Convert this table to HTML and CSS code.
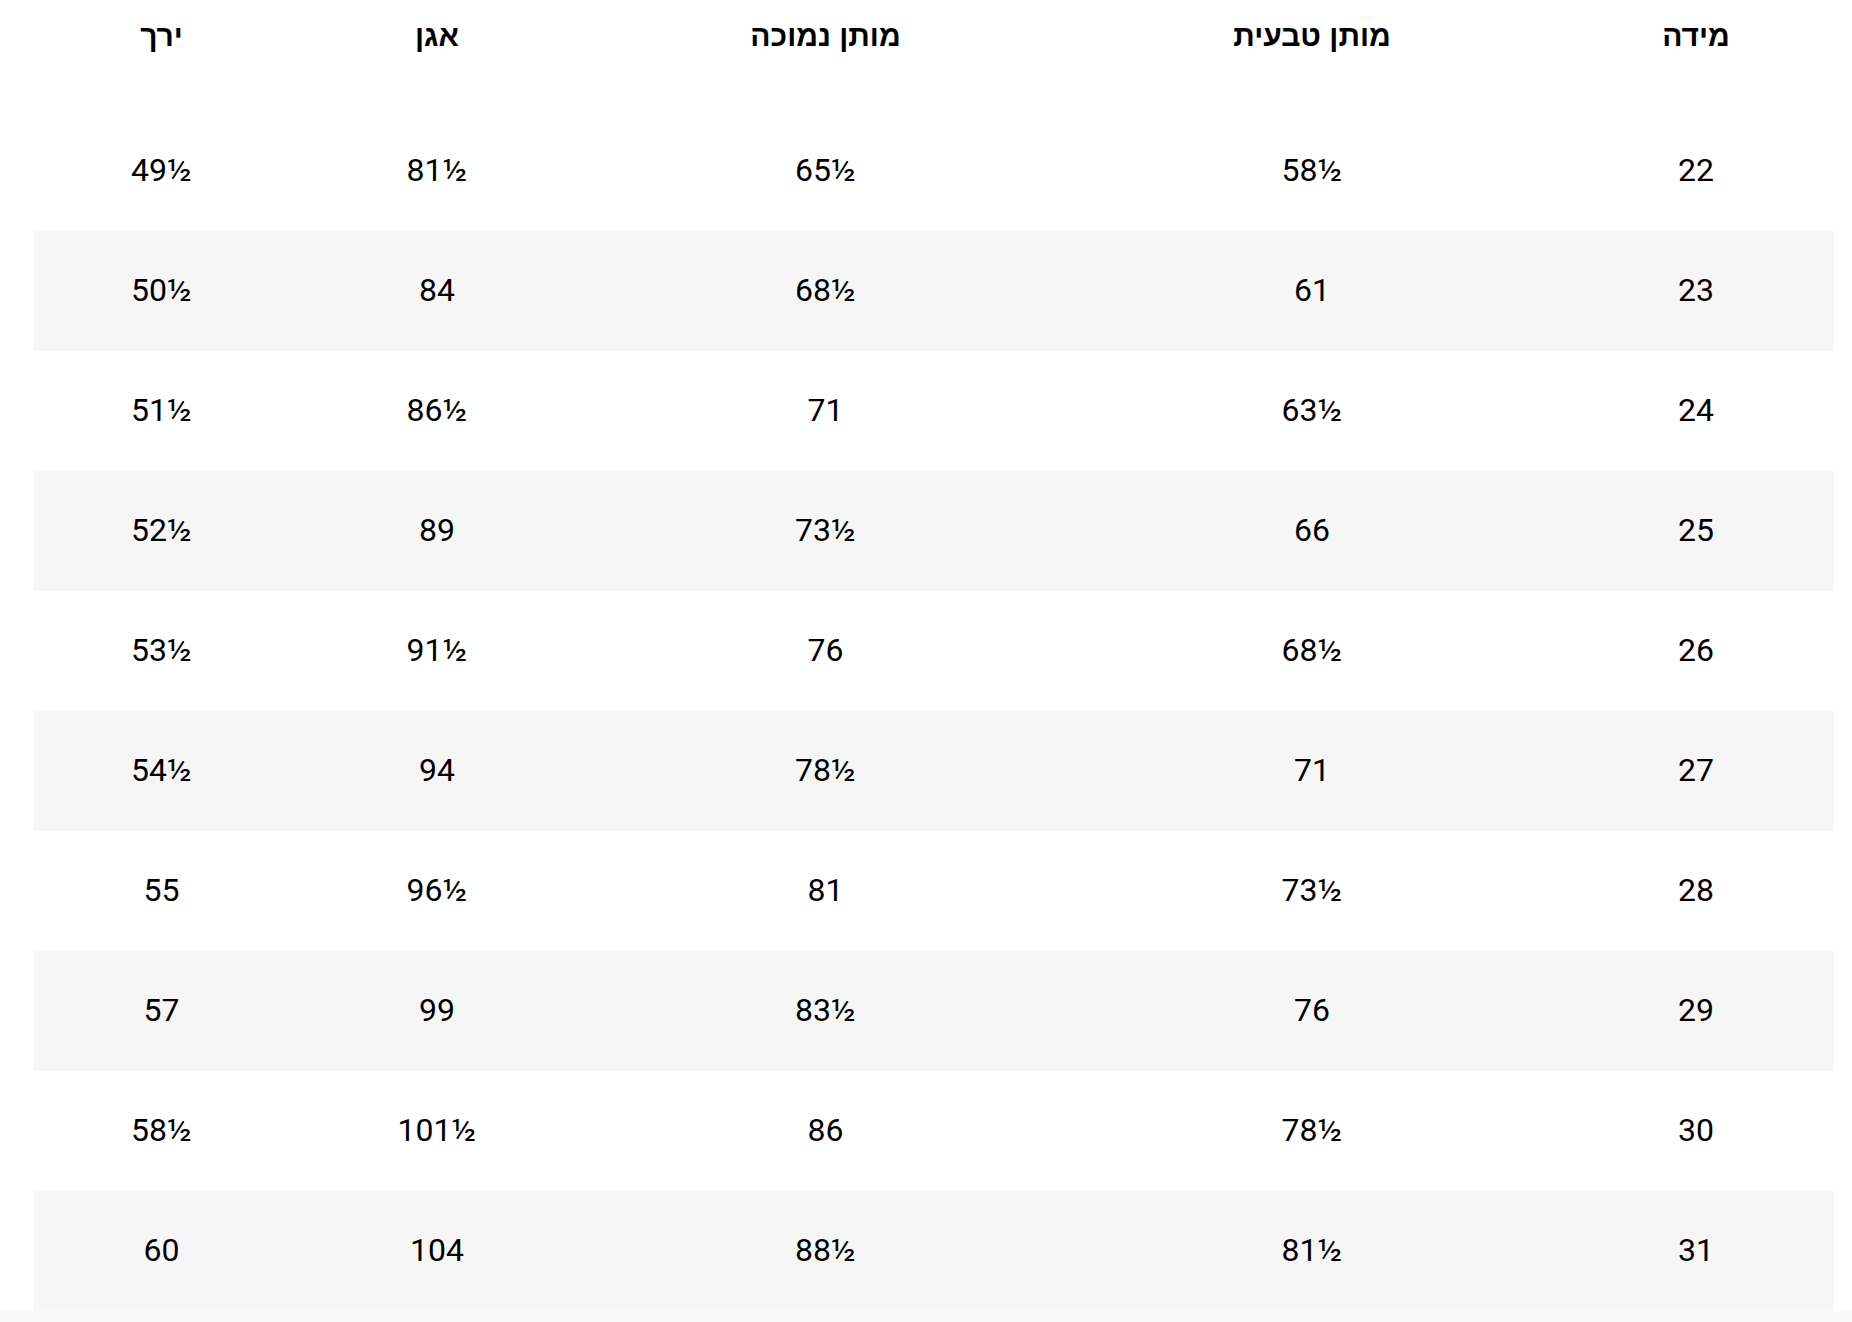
FILE: index.html
```html
<!DOCTYPE html>
<html lang="he" dir="rtl">
<head>
<meta charset="utf-8">
<title>טבלת מידות</title>
<link rel="stylesheet" href="styles.css">
</head>
<body>
<div class="wrap">
  <table class="sizes">
    <colgroup>
      <col class="c1"><col class="c2"><col class="c3"><col class="c4"><col class="c5">
    </colgroup>
    <thead>
      <tr><th>מידה</th><th>מותן טבעית</th><th>מותן נמוכה</th><th>אגן</th><th>ירך</th></tr>
    </thead>
    <tbody>
      <tr><td>22</td><td>58½</td><td>65½</td><td>81½</td><td>49½</td></tr>
      <tr><td>23</td><td>61</td><td>68½</td><td>84</td><td>50½</td></tr>
      <tr><td>24</td><td>63½</td><td>71</td><td>86½</td><td>51½</td></tr>
      <tr><td>25</td><td>66</td><td>73½</td><td>89</td><td>52½</td></tr>
      <tr><td>26</td><td>68½</td><td>76</td><td>91½</td><td>53½</td></tr>
      <tr><td>27</td><td>71</td><td>78½</td><td>94</td><td>54½</td></tr>
      <tr><td>28</td><td>73½</td><td>81</td><td>96½</td><td>55</td></tr>
      <tr><td>29</td><td>76</td><td>83½</td><td>99</td><td>57</td></tr>
      <tr><td>30</td><td>78½</td><td>86</td><td>101½</td><td>58½</td></tr>
      <tr><td>31</td><td>81½</td><td>88½</td><td>104</td><td>60</td></tr>
    </tbody>
  </table>
</div>
<div class="fade"></div>
</body>
</html>
```
FILE: styles.css
```css
html, body {
  margin: 0;
  padding: 0;
  background: #ffffff;
}
body {
  font-family: Roboto, "Liberation Sans", sans-serif;
  color: #000;
  overflow: hidden;
}
.wrap {
  padding: 0 18px 0 34px;
}
.sizes {
  width: 1800px;
  border-collapse: collapse;
  table-layout: fixed;
}
.c1 { width: 276px; }
.c2 { width: 492px; }
.c3 { width: 481px; }
.c4 { width: 296px; }
.c5 { width: 255px; }
.sizes th {
  height: 111px;
  box-sizing: border-box;
  padding: 16px 0 0;
  vertical-align: top;
  text-align: center;
  font-family: "Liberation Sans", Arial, sans-serif;
  font-weight: 700;
  font-size: 30px;
  line-height: 40px;
}
.sizes td {
  height: 120px;
  box-sizing: border-box;
  padding: 0 0 3px;
  text-align: center;
  vertical-align: middle;
  direction: ltr;
  font-size: 32px;
  font-weight: 400;
  line-height: 40px;
}
.sizes tbody tr:nth-child(even) td {
  background: #f6f6f6;
}
.fade {
  position: fixed;
  left: 0;
  right: 0;
  bottom: 0;
  height: 11px;
  background: #fafafa;
}
```
